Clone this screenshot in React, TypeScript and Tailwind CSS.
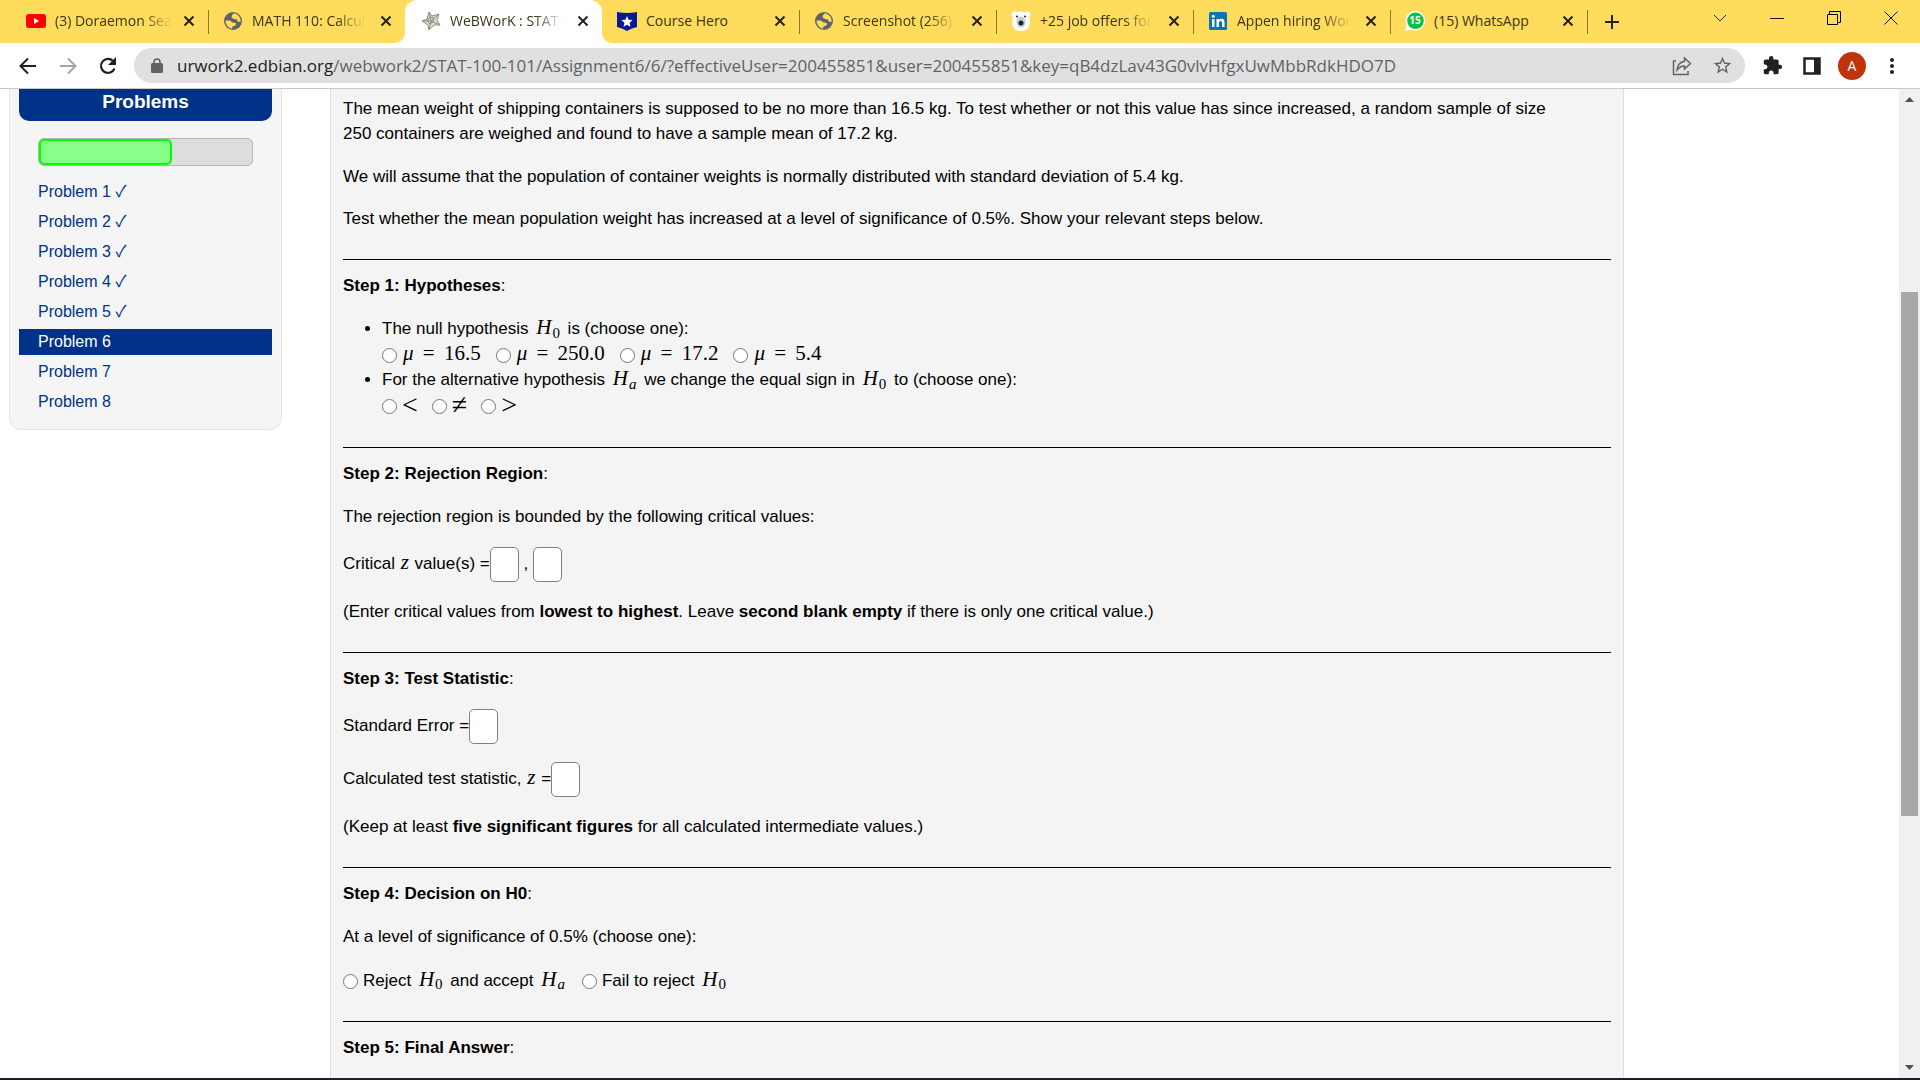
import { useState } from 'react';
import type { ReactNode } from 'react';
import { MdExtension, MdStarBorder } from 'react-icons/md';

const tabs = [
  { icon: 'youtube', title: '(3) Doraemon Sea', fade: true },
  { icon: 'globe', title: 'MATH 110: Calcul', fade: true },
  { icon: 'web', title: 'WeBWorK : STAT-', fade: true, active: true },
  { icon: 'hero', title: 'Course Hero' },
  { icon: 'globe', title: 'Screenshot (256).', fade: true },
  { icon: 'bear', title: '+25 job offers for', fade: true },
  { icon: 'linkedin', title: 'Appen hiring Wor', fade: true },
  { icon: 'whatsapp', title: '(15) WhatsApp' },
];

const nullOptions = ['16.5', '250.0', '17.2', '5.4'];
const signOptions = ['<', '≠', '>'];

function TabIcon({ name }: { name: string }) {
  if (name === 'youtube') {
    return (
      <svg viewBox="0 0 20 20" className="size-5 shrink-0">
        <rect y="3" width="20" height="14" rx="3" fill="#f00" />
        <path d="M8 7v6l5-3z" fill="#fff" />
      </svg>
    );
  }
  if (name === 'globe') {
    return (
      <svg viewBox="0 0 20 20" className="size-5 shrink-0">
        <circle cx="10" cy="10" r="9" fill="#5f6368" />
        <path
          d="M2.5 9.500 7 9.500 9.500 11.500 13 12 12.500 14.500 9.500 15.500 9 17.800A8 8 0 0 1 2.500 9.500ZM11 2.300 9 4 8.500 6.500 11 8 14 8.500 14.500 10.500 17.600 11A8 8 0 0 0 11 2.300Z"
          fill="#ffdc5c"
        />
      </svg>
    );
  }
  if (name === 'web') {
    return (
      <svg viewBox="0 0 20 20" className="size-5 shrink-0" fill="#dcdcd0" stroke="#8f8f86">
        <path d="M8 1 11 5 18 3 16 9 19 14 13 14 8 19 7 14 1 10 6 8Z" />
        <path d="M9 6 13 7 12 11 9 13 6 10ZM8 1 10 10 18 3M1 10 10 10 19 14M8 19 10 10" fill="none" />
      </svg>
    );
  }
  if (name === 'hero') {
    return (
      <svg viewBox="0 0 20 20" className="size-5 shrink-0">
        <path d="M0 1Q10 3 20 1V16Q15 17 10 20Q5 17 0 16Z" fill="#0a1897" />
        <path d="m10 5 1.600 3.700 4 .4-3 2.700.9 4L10 13.700l-3.500 2.100.9-4-3-2.700 4-.4z" fill="#fff" />
      </svg>
    );
  }
  if (name === 'bear') {
    return (
      <svg viewBox="0 0 20 20" className="size-5 shrink-0">
        <circle cx="3.500" cy="3.500" r="3" fill="#fff" />
        <circle cx="16.500" cy="3.500" r="3" fill="#fff" />
        <path d="M2 3Q10-2 18 3L19 12Q18 20 10 20Q2 20 1 12Z" fill="#fff" />
        <circle cx="6" cy="5.500" r="1" fill="#222" />
        <circle cx="14" cy="5.500" r="1" fill="#222" />
        <ellipse cx="10" cy="11" rx="4.500" ry="5.500" fill="#c3cfdb" />
        <circle cx="10" cy="12" r="2.500" fill="#222" />
      </svg>
    );
  }
  if (name === 'linkedin') {
    return (
      <svg viewBox="0 0 20 20" className="size-5 shrink-0">
        <rect x="1" y="1" width="18" height="18" rx="1.500" fill="#0a75b5" />
        <path
          d="M4 8h2.500v8H4ZM8.500 8H11v1.200C11.500 8.300 12.500 7.800 13.500 7.800 16 7.800 16.500 9.500 16.500 11.500V16H14v-4c0-1.200-.2-2-1.400-2S11 11 11 12v4H8.500Z"
          fill="#fff"
        />
        <circle cx="5.250" cy="5.250" r="1.500" fill="#fff" />
      </svg>
    );
  }
  return (
    <span className="relative flex size-5 shrink-0 items-center justify-center">
      <svg viewBox="0 0 20 20" className="absolute size-5">
        <path d="M0 20 1.500 14A9.800 9.800 0 1 1 6 18.500Z" fill="#fff" />
        <circle cx="10.500" cy="9.800" r="8.300" fill="#0dc143" />
      </svg>
      <span className="relative text-[10px] font-bold text-white">15</span>
    </span>
  );
}

function Tab({ icon, title, fade, active }: { icon: string; title: string; fade?: boolean; active?: boolean }) {
  return (
    <div
      className={
        active
          ? 'relative -ml-px flex h-full w-[197px] items-center gap-[9px] rounded-t-xl bg-white pr-[13px] pb-0.5 pl-4'
          : 'relative flex h-full w-[196px] items-center gap-[9px] pr-[13px] pb-0.5 pl-[14px]'
      }
    >
      {active && (
        <>
          <svg viewBox="0 0 10 10" className="absolute bottom-0 -left-[10px] size-[10px]" fill="#fff">
            <path d="M10 0v10H0A10 10 0 0 0 10 0z" />
          </svg>
          <svg viewBox="0 0 10 10" className="absolute -right-[10px] bottom-0 size-[10px]" fill="#fff">
            <path d="M0 0v10h10A10 10 0 0 1 0 0z" />
          </svg>
        </>
      )}
      <TabIcon name={icon} />
      <span
        className={
          fade
            ? 'mask-r-from-75% mask-r-to-100% text-[14px] whitespace-nowrap text-[#3c3418]'
            : 'text-[14px] whitespace-nowrap text-[#3c3418]'
        }
      >
        {title}
      </span>
      <button aria-label={`Close ${title}`} className="ml-auto shrink-0">
        <svg viewBox="0 0 12 12" className="size-3" stroke="#222" strokeWidth="2">
          <path d="m1.500 1.500 9 9m0-9-9 9" />
        </svg>
      </button>
    </div>
  );
}

function Browser() {
  return (
    <header className="shrink-0 border-b border-[#c9c9c9] font-['Open_Sans',sans-serif]">
      <div className="flex h-[43px] items-center bg-[#ffdc5c] pl-3">
        {tabs.map((tab, i) => (
          <div key={i} className="flex h-full items-center">
            <Tab {...tab} />
            <span className={i === 1 || i === 2 ? 'w-px' : 'h-6 w-px bg-[#8a7835]'} />
          </div>
        ))}
        <button aria-label="New tab" className="ml-4">
          <svg viewBox="0 0 16 16" className="size-4" stroke="#222" strokeWidth="2">
            <path d="M8 1v14M1 8h14" />
          </svg>
        </button>
        <div className="ml-auto flex items-center gap-[43px] pr-[22px] pb-[7px]">
          <button aria-label="Search tabs">
            <svg viewBox="0 0 14 14" className="size-[14px]" fill="none" stroke="#222">
              <path d="m1 4 6 6 6-6" />
            </svg>
          </button>
          <button aria-label="Minimize">
            <svg viewBox="0 0 14 14" className="size-[14px]" fill="none" stroke="#111">
              <path d="M0 7.500h14" />
            </svg>
          </button>
          <button aria-label="Restore">
            <svg viewBox="0 0 14 14" className="size-[14px]" fill="none" stroke="#000">
              <path d="M1 3.500h9.500v10H.5v-10M2.500 3.500v-3h11v11h-3" />
            </svg>
          </button>
          <button aria-label="Close">
            <svg viewBox="0 0 14 14" className="size-[14px]" fill="none" stroke="#111">
              <path d="m.5.5 13 13m0-13-13 13" />
            </svg>
          </button>
        </div>
      </div>

      <div className="flex h-[45px] items-center bg-white px-[18px]">
        <button aria-label="Back">
          <svg viewBox="0 0 20 20" className="size-5" fill="none" stroke="#202124" strokeWidth="2">
            <path d="M18 10H3m7-7.500L2.500 10l7.500 7.500" />
          </svg>
        </button>
        <button aria-label="Forward" className="ml-5">
          <svg viewBox="0 0 20 20" className="size-5" fill="none" stroke="#a3a3a3" strokeWidth="2">
            <path d="M2 10h15m-7-7.500 7.500 7.500-7.500 7.500" />
          </svg>
        </button>
        <button aria-label="Reload" className="ml-5">
          <svg viewBox="0 0 20 20" className="size-5">
            <path d="M16.500 12.500A7 7 0 1 1 15 5" fill="none" stroke="#202124" strokeWidth="2.200" />
            <path d="M18 1v8h-8z" fill="#202124" />
          </svg>
        </button>
        <div className="ml-4 flex h-[35px] min-w-0 flex-1 items-center rounded-full bg-[#e0e0e0] pr-3 pl-[17px]">
          <svg viewBox="0 0 12 16" className="h-4 w-3 shrink-0">
            <rect y="5" width="12" height="10" rx="1.500" fill="#5f6368" />
            <path d="M3 6V4a3 3 0 0 1 6 0v2" fill="none" stroke="#5f6368" strokeWidth="1.600" />
          </svg>
          <p className="ml-[14px] flex-1 overflow-hidden text-[17px] whitespace-nowrap text-[#5f6368]">
            <span className="text-[#202124]">urwork2.edbian.org</span>
            /webwork2/STAT-100-101/Assignment6/6/?effectiveUser=200455851&user=200455851&key=qB4dzLav43G0vlvHfgxUwMbbRdkHDO7D
          </p>
          <button aria-label="Share this page">
            <svg viewBox="0 0 20 20" className="size-5" fill="none" stroke="#5f6368" strokeWidth="1.500">
              <path d="M4 5H1.500v13.500H16V15M12.500 2l6 5.500-6 5.500v-3C9 10 7 11.500 5 14 5.500 9 8 6 12.500 5.200Z" />
            </svg>
          </button>
          <button aria-label="Bookmark this tab" className="ml-5">
            <MdStarBorder className="size-[21px] text-[#5f6368]" />
          </button>
        </div>
        <button aria-label="Extensions" className="ml-[17px]">
          <MdExtension className="size-[21px] text-[#202124]" />
        </button>
        <button aria-label="Side panel" className="ml-[19px]">
          <svg viewBox="0 0 20 20" className="size-5">
            <path d="M2.500 2.500h15v15h-15z" fill="none" stroke="#202124" strokeWidth="2.500" />
            <path d="M12 2h6v16h-6z" fill="#202124" />
          </svg>
        </button>
        <button
          aria-label="Profile"
          className="ml-4 flex size-7 items-center justify-center rounded-full bg-[#c0330b] text-sm text-white"
        >
          A
        </button>
        <button aria-label="Menu" className="ml-4">
          <svg viewBox="0 0 20 20" className="size-5" fill="#202124">
            <circle cx="10" cy="4" r="2" />
            <circle cx="10" cy="10" r="2" />
            <circle cx="10" cy="16" r="2" />
          </svg>
        </button>
      </div>
    </header>
  );
}

function Sidebar() {
  return (
    <aside className="-mt-5 ml-[9px] w-[273px] shrink-0 self-start rounded-xl border border-[#e6e6e6] bg-[#f5f5f5] px-[9px] pb-[14px]">
      <h2 className="flex h-[51px] items-end justify-center rounded-[10px] bg-[#003388] pb-[7px] text-[19px] leading-6 font-bold text-white">
        Problems
      </h2>
      <div className="mx-[19px] mt-[17px] h-7 rounded-md border border-[#b5b5b5] bg-[#ddd]">
        <div className="h-[26px] w-5/8 rounded-[5px] border-2 border-[#00ff00] bg-[#88ff88]" />
      </div>
      <ul className="mt-[13px] flex flex-col gap-1">
        {[1, 2, 3, 4, 5, 6, 7, 8].map((n) => (
          <li key={n}>
            <a
              href={`#problem-${n}`}
              className={
                n === 6
                  ? 'block h-[26px] bg-[#003388] px-[19px] text-[16px] leading-[26px] text-white'
                  : 'block h-[26px] px-[19px] text-[16px] leading-[26px] text-[#003388]'
              }
            >
              Problem {n}
              {n < 6 && (
                <>
                  {' '}
                  <span className="font-['Noto_Sans_CJK_JP','DejaVu_Sans',sans-serif] leading-none">✓</span>
                </>
              )}
            </a>
          </li>
        ))}
      </ul>
    </aside>
  );
}

function MathText({ children }: { children: ReactNode }) {
  return <span className="px-px font-['Liberation_Serif',serif] text-[21px] leading-[20px]">{children}</span>;
}

function Hyp({ sub }: { sub: ReactNode }) {
  return (
    <span className="px-0.5">
      <MathText>
        <i>H</i>
        <sub className="pl-px text-[15px]">{sub}</sub>
      </MathText>
    </span>
  );
}

function Choice({ name, children }: { name: string; children: ReactNode }) {
  return (
    <label className="mr-[14px] inline-flex items-center gap-[5px]">
      <input
        type="radio"
        name={name}
        className="mt-0.5 size-[15px] appearance-none rounded-full border border-[#767676] bg-white checked:border-4 checked:border-[#0075ff]"
      />
      <span>{children}</span>
    </label>
  );
}

function Blank({ label, value, onChange }: { label: string; value: string; onChange: (v: string) => void }) {
  return (
    <input
      type="text"
      aria-label={label}
      value={value}
      onChange={(e) => onChange(e.target.value)}
      className="h-[35px] w-[29px] rounded-[5px] border border-[#808080] bg-white px-1 align-middle"
    />
  );
}

function Step({ title, children }: { title: string; children?: ReactNode }) {
  return (
    <section className="mt-7 border-t border-black pt-[13px]">
      <h3>
        <b>{title}</b>:
      </h3>
      {children}
    </section>
  );
}

function Problem() {
  const [answers, setAnswers] = useState<Record<string, string>>({});

  const blank = (id: string, label: string) => (
    <Blank label={label} value={answers[id] || ''} onChange={(v) => setAnswers({ ...answers, [id]: v })} />
  );

  return (
    <main className="ml-12 min-w-0 flex-1 border-x border-[#ddd] bg-[#f4f4f4] px-3 pt-[7px] text-[17px] leading-[25px] text-black">
      <p className="pr-12">
        The mean weight of shipping containers is supposed to be no more than 16.5 kg. To test whether or not this value
        has since increased, a random sample of size 250 containers are weighed and found to have a sample mean of 17.2
        kg.
      </p>
      <p className="mt-[18px]">
        We will assume that the population of container weights is normally distributed with standard deviation of 5.4
        kg.
      </p>
      <p className="mt-[17px]">
        Test whether the mean population weight has increased at a level of significance of 0.5%. Show your relevant
        steps below.
      </p>

      <Step title="Step 1: Hypotheses">
        <ul className="mt-[18px] ml-[39px] list-disc pb-px">
          <li>
            The null hypothesis <Hyp sub="0" /> is (choose one):
            <div className="flex h-[26px] items-center">
              {nullOptions.map((value) => (
                <Choice key={value} name="null">
                  <MathText>
                    <i>μ</i> <span className="px-1">=</span> {value}
                  </MathText>
                </Choice>
              ))}
            </div>
          </li>
          <li>
            For the alternative hypothesis <Hyp sub={<i>a</i>} /> we change the equal sign in <Hyp sub="0" /> to (choose
            one):
            <div className="flex h-[26px] items-center">
              {signOptions.map((sign) => (
                <Choice key={sign} name="sign">
                  <span className="block font-['Liberation_Serif',serif] text-[28px] leading-[26px]">{sign}</span>
                </Choice>
              ))}
            </div>
          </li>
        </ul>
      </Step>

      <Step title="Step 2: Rejection Region">
        <p className="mt-[18px]">The rejection region is bounded by the following critical values:</p>
        <p className="mt-[18px]">
          Critical <MathText><i>z</i></MathText> value(s) ={blank('low', 'First critical value')} ,{' '}
          {blank('high', 'Second critical value')}
        </p>
        <p className="mt-[17px]">
          (Enter critical values from <b>lowest to highest</b>. Leave <b>second blank empty</b> if there is only one
          critical value.)
        </p>
      </Step>

      <Step title="Step 3: Test Statistic">
        <p className="mt-[18px]">Standard Error ={blank('error', 'Standard error')}</p>
        <p className="mt-[18px]">
          Calculated test statistic, <MathText><i>z</i></MathText> ={blank('z', 'Calculated test statistic')}
        </p>
        <p className="mt-[17px]">
          (Keep at least <b>five significant figures</b> for all calculated intermediate values.)
        </p>
      </Step>

      <Step title="Step 4: Decision on H0">
        <p className="mt-[18px]">At a level of significance of 0.5% (choose one):</p>
        <div className="mt-[18px] flex h-[26px] items-center">
          <Choice name="decision">
            Reject <Hyp sub="0" /> and accept <Hyp sub={<i>a</i>} />
          </Choice>
          <Choice name="decision">
            Fail to reject <Hyp sub="0" />
          </Choice>
        </div>
      </Step>

      <Step title="Step 5: Final Answer" />
    </main>
  );
}

function Scrollbar() {
  return (
    <div className="flex w-[21px] shrink-0 flex-col items-center bg-[#f0f0f0] py-2">
      <svg viewBox="0 0 9 5" className="h-[5px] w-[9px]" fill="#505050">
        <path d="M0 5 4.500 0 9 5z" />
      </svg>
      <div className="flex w-full flex-1 flex-col px-[2px]">
        <div className="flex-[189]" />
        <div className="flex-[522] bg-[#a8a8a8]" />
        <div className="flex-[248]" />
      </div>
      <svg viewBox="0 0 9 5" className="h-[5px] w-[9px]" fill="#505050">
        <path d="M0 0h9L4.500 5z" />
      </svg>
    </div>
  );
}

export default function App() {
  return (
    <div className="flex h-screen flex-col overflow-hidden border-b-2 border-[#1f1f23] bg-white font-['Liberation_Sans',Arial,sans-serif]">
      <Browser />
      <div className="flex min-h-0 flex-1">
        <div className="flex min-w-0 flex-1 overflow-hidden pr-[275px]">
          <Sidebar />
          <Problem />
        </div>
        <Scrollbar />
      </div>
    </div>
  );
}
